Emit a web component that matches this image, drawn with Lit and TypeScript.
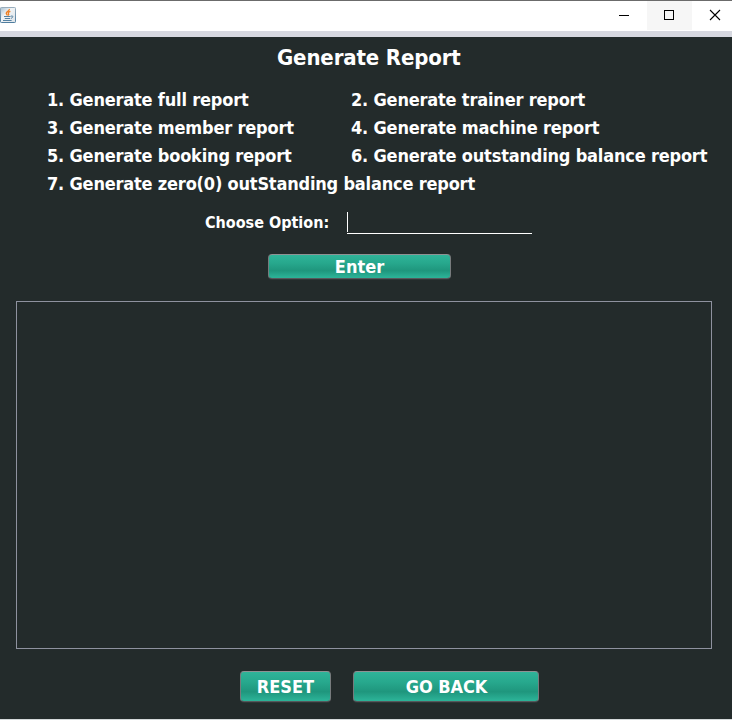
import { LitElement, html, css, svg } from "lit";
import { customElement } from "lit/decorators.js";

const OPTIONS = [
  "1. Generate full report",
  "2. Generate trainer report",
  "3. Generate member report",
  "4. Generate machine report",
  "5. Generate booking report",
  "6. Generate outstanding balance report",
  "7. Generate zero(0) outStanding balance report",
];

@customElement("java-icon")
class JavaIcon extends LitElement {
  static styles = css`
    :host { display: block; width: 16px; height: 16px; }
    svg { display: block; }
  `;
  render() {
    return html`<svg width="16" height="16" viewBox="0 0 16 16">
      <defs>
        <linearGradient id="edge" x1="0" y1="0" x2="0" y2="1">
          <stop offset="0" stop-color="#98adbd" />
          <stop offset="1" stop-color="#4f7d9f" />
        </linearGradient>
        <linearGradient id="face" x1="0" y1="0" x2="1" y2="1">
          <stop offset="0" stop-color="#a9c0d0" />
          <stop offset=".4" stop-color="#f1f4f6" />
          <stop offset="1" stop-color="#dde3e8" />
        </linearGradient>
      </defs>
      <rect x=".5" y=".5" width="15" height="15" rx=".8" fill="url(#face)" stroke="url(#edge)" />
      ${svg`<path d="M9.3 2C9.8 3.8 6.2 4.6 6.3 6.3c.1.9 1 1.3 1 2.2M10.4 4.4C8.4 5 7.8 5.8 8.5 6.6c.5.6.3 1.2-.3 1.8" fill="none" stroke="#ee8026" stroke-width="1.4" />
      <path d="M4 9.5h6.5M4.8 11.5h5.4M3 13.5h8.6M10.8 9.2c2.6-1 2.8 1.2.2 2.2" fill="none" stroke="#5582a3" stroke-width="1" />`}
    </svg>`;
  }
}

@customElement("app-root")
class AppRoot extends LitElement {
  static styles = css`
    :host {
      display: flex;
      flex-direction: column;
      box-sizing: border-box;
      width: 732px;
      height: 720px;
      overflow: hidden;
      background: #232b2b;
      border-top: 1px solid #6b6b6b;
      border-bottom: 1px solid #d5dadb;
      color: #fff;
      font: bold 18px "DejaVu Sans Condensed", "DejaVu Sans", sans-serif;
      font-stretch: condensed;
    }
    .titlebar {
      display: flex;
      flex: none;
      height: 30px;
      background: #fff;
      border-bottom: 6px solid #d6d8e0;
    }
    .logo { margin-top: 6px; }
    .controls { display: flex; margin: 0 -5px 0 auto; }
    .control {
      width: 45px;
      height: 29px;
      flex: none;
    }
    .control svg { display: block; }
    .control.hover { background: #f6f6f6; }
    h1 {
      margin: 6px 0 0 277px;
      font-size: 22px;
      line-height: 30px;
      height: 30px;
      letter-spacing: -0.14px;
      white-space: nowrap;
    }
    .options {
      display: grid;
      grid-template-columns: 304px auto;
      grid-auto-rows: 28px;
      line-height: 28px;
      margin: 13px 0 0 47px;
      letter-spacing: -0.19px;
      white-space: nowrap;
    }
    .ask {
      display: flex;
      margin: 14px 0 0 205px;
      height: 22px;
    }
    label {
      width: 142px;
      font-size: 16px;
      line-height: 22px;
      white-space: nowrap;
    }
    .field {
      width: 185px;
      height: 21px;
      border-bottom: 1px solid #fff;
    }
    .caret { width: 1px; height: 20px; background: #fff; }
    button {
      display: block;
      box-sizing: border-box;
      padding: 0;
      border: 1px solid;
      border-color: #8e9293 #777b7d #55595b;
      border-radius: 4px;
      color: inherit;
      font: inherit;
      white-space: nowrap;
      background: linear-gradient(#2fb499, #27a88d 35%, #1f967d 68%, #2bb196 96%);
      box-shadow: 0 1px 0 #303537;
    }
    .enter { width: 183px; height: 25px; margin: 20px 0 0 268px; line-height: 23px; }
    .output {
      box-sizing: border-box;
      width: 696px;
      height: 348px;
      margin: 22px 0 0 16px;
      border: 1px solid #8e929f;
    }
    .actions { display: flex; gap: 22px; margin: 22px 0 0 240px; }
    .actions button { height: 31px; line-height: 29px; }
    .reset { width: 91px; }
    .actions .back { width: 186px; padding-left: 1px; letter-spacing: -0.1px; }
  `;
  render() {
    return html`
      <div class="titlebar">
        <java-icon class="logo"></java-icon>
        <div class="controls">
          <div class="control"><svg width="45" height="29"><path d="M17 14.5h10" stroke="#000" /></svg></div>
          <div class="control hover"><svg width="45" height="29"><rect x="17.5" y="9.5" width="9" height="9" fill="none" stroke="#000" /></svg></div>
          <div class="control"><svg width="45" height="29"><path d="M18 9l10 10M28 9l-10 10" stroke="#000" stroke-width="1.1" /></svg></div>
        </div>
      </div>
      <h1>Generate Report</h1>
      <div class="options">${OPTIONS.map((o) => html`<div>${o}</div>`)}</div>
      <div class="ask">
        <label>Choose Option:</label>
        <div class="field"><div class="caret"></div></div>
      </div>
      <button class="enter">Enter</button>
      <div class="output"></div>
      <div class="actions">
        <button class="reset">RESET</button>
        <button class="back">GO BACK</button>
      </div>
    `;
  }
}
